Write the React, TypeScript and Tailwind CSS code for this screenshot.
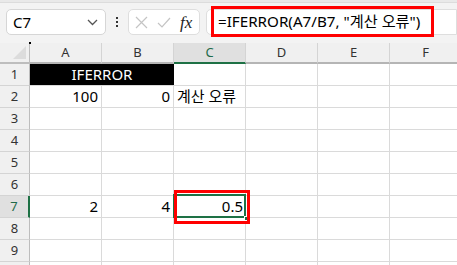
const cols = ["A", "B", "C", "D", "E", "F"];
const rows = [1, 2, 3, 4, 5, 6, 7, 8, 9, 10];

function Cell({ r, c }: { r: number; c: string }) {
  const base = "h-[22px] border-r border-b border-[#dadada] bg-white flex items-center text-[15px] text-black leading-none";
  if (r === 1 && c === "A")
    return (
      <div className="col-span-2 h-[22px] border-b border-[#dadada] bg-black text-white flex items-center justify-center text-[15px] leading-none">
        IFERROR
      </div>
    );
  if (r === 1 && c === "B") return null;
  let text = "";
  let cls = "justify-end pr-[3px]";
  if (r === 2 && c === "A") text = "100";
  if (r === 2 && c === "B") text = "0";
  if (r === 2 && c === "C") {
    text = "계산 오류";
    cls = "justify-start pl-[3px] overflow-visible whitespace-nowrap relative z-10 text-[15.5px]";
  }
  if (r === 7 && c === "A") text = "2";
  if (r === 7 && c === "B") text = "4";
  if (r === 7 && c === "C") {
    return (
      <div className={`${base} relative`}>
        <div className="absolute -left-[1px] -top-[2px] w-[73px] h-[24px] border-2 border-[#1e7145] flex items-center justify-end pr-[1px] text-[15px]">
          0.5
        </div>
        <div className="absolute right-[-4px] bottom-[-4px] w-[5px] h-[5px] bg-[#1e7145] border border-white" />
        <div className="absolute left-[0px] top-[-6px] w-[76px] h-[34px] border-[3px] border-[#ff0000] z-20" />
      </div>
    );
  }
  return <div className={`${base} ${cls}`}>{text}</div>;
}

export default function App() {
  return (
    <div
      className="w-[457px] h-[265px] overflow-hidden bg-[#f3f3f3] relative"
      style={{ fontFamily: '"Noto Sans", "Noto Sans CJK KR", sans-serif' }}
    >
      <div className="h-[3px] bg-[#e9e9e9] border-b border-[#dcdcdc]" />
      <div className="h-[40px] flex items-start pt-[6px]">
        <div className="ml-[6px] w-[100px] h-[26px] bg-white border border-[#d6d6d6] rounded-[5px] flex items-center justify-between pl-[6px] pr-[7px]">
          <span className="text-[15px] text-black leading-none">C7</span>
          <svg width="11" height="7" viewBox="0 0 11 7" fill="none">
            <path d="M1 1l4.5 4.5L10 1" stroke="#555" strokeWidth="1.3" />
          </svg>
        </div>
        <div className="w-[22px] h-[26px] flex flex-col items-center justify-center gap-[2px]">
          <span className="w-[2px] h-[2px] bg-[#333]" />
          <span className="w-[2px] h-[2px] bg-[#333]" />
          <span className="w-[2px] h-[2px] bg-[#333]" />
        </div>
        <div className="w-[72px] h-[26px] bg-white border border-[#dedede] rounded-[5px] flex items-center pl-[6px] gap-[9px]">
          <svg width="13" height="13" viewBox="0 0 13 13" fill="none">
            <path d="M1 1l11 11M12 1L1 12" stroke="#c4c4c4" strokeWidth="1.2" />
          </svg>
          <svg width="14" height="11" viewBox="0 0 14 11" fill="none">
            <path d="M1 6l4 4L13 1" stroke="#c4c4c4" strokeWidth="1.2" />
          </svg>
          <span
            className="text-[17px] italic text-[#222] leading-none"
            style={{ fontFamily: '"Liberation Serif", serif' }}
          >
            fx
          </span>
        </div>
        <div className="ml-[6px] flex-1 h-[26px] bg-white border border-[#dedede] rounded-l-[5px] flex items-center pl-[11px] relative">
          <span className="text-[15.2px] text-black leading-none whitespace-nowrap">
            =IFERROR(A7/B7, "계산 오류")
          </span>
          <div className="absolute left-[4px] top-[-4px] w-[223px] h-[31px] border-[3px] border-[#ff0000]" />
        </div>
      </div>
      <div className="grid grid-cols-[30px_72px_72px_72px_72px_72px_72px]">
        <div className="h-[21px] bg-[#f0f0f0] border-r border-b-2 border-[#bdbdbd] relative">
          <div className="absolute right-[3px] bottom-[3px] w-0 h-0 border-l-[13px] border-l-transparent border-b-[13px] border-b-[#dcdcdc]" />
          <div className="absolute right-[-2px] top-[-1px] w-[2px] h-[2px] bg-black" />
        </div>
        {cols.map((c) => (
          <div
            key={c}
            className={`h-[21px] flex items-center justify-center text-[13px] leading-none border-r border-[#d4d4d4] border-b-2 ${
              c === "C" ? "bg-[#e0e0e0] text-[#1e6b4a] border-b-[#1e7145]" : "bg-[#f0f0f0] text-[#333] border-b-[#b5b5b5]"
            }`}
          >
            {c}
          </div>
        ))}
        {rows.map((r) => (
          <>
            <div
              key={`h${r}`}
              className={`h-[22px] flex items-center justify-center text-[13px] leading-none border-b border-[#d4d4d4] ${
                r === 7
                  ? "bg-[#e0e0e0] text-[#1e6b4a] border-r-2 border-r-[#1e7145]"
                  : "bg-[#f0f0f0] text-[#333] border-r border-r-[#bdbdbd]"
              }`}
            >
              {r}
            </div>
            {cols.map((c) => (
              <Cell key={`${c}${r}`} r={r} c={c} />
            ))}
          </>
        ))}
      </div>
    </div>
  );
}
